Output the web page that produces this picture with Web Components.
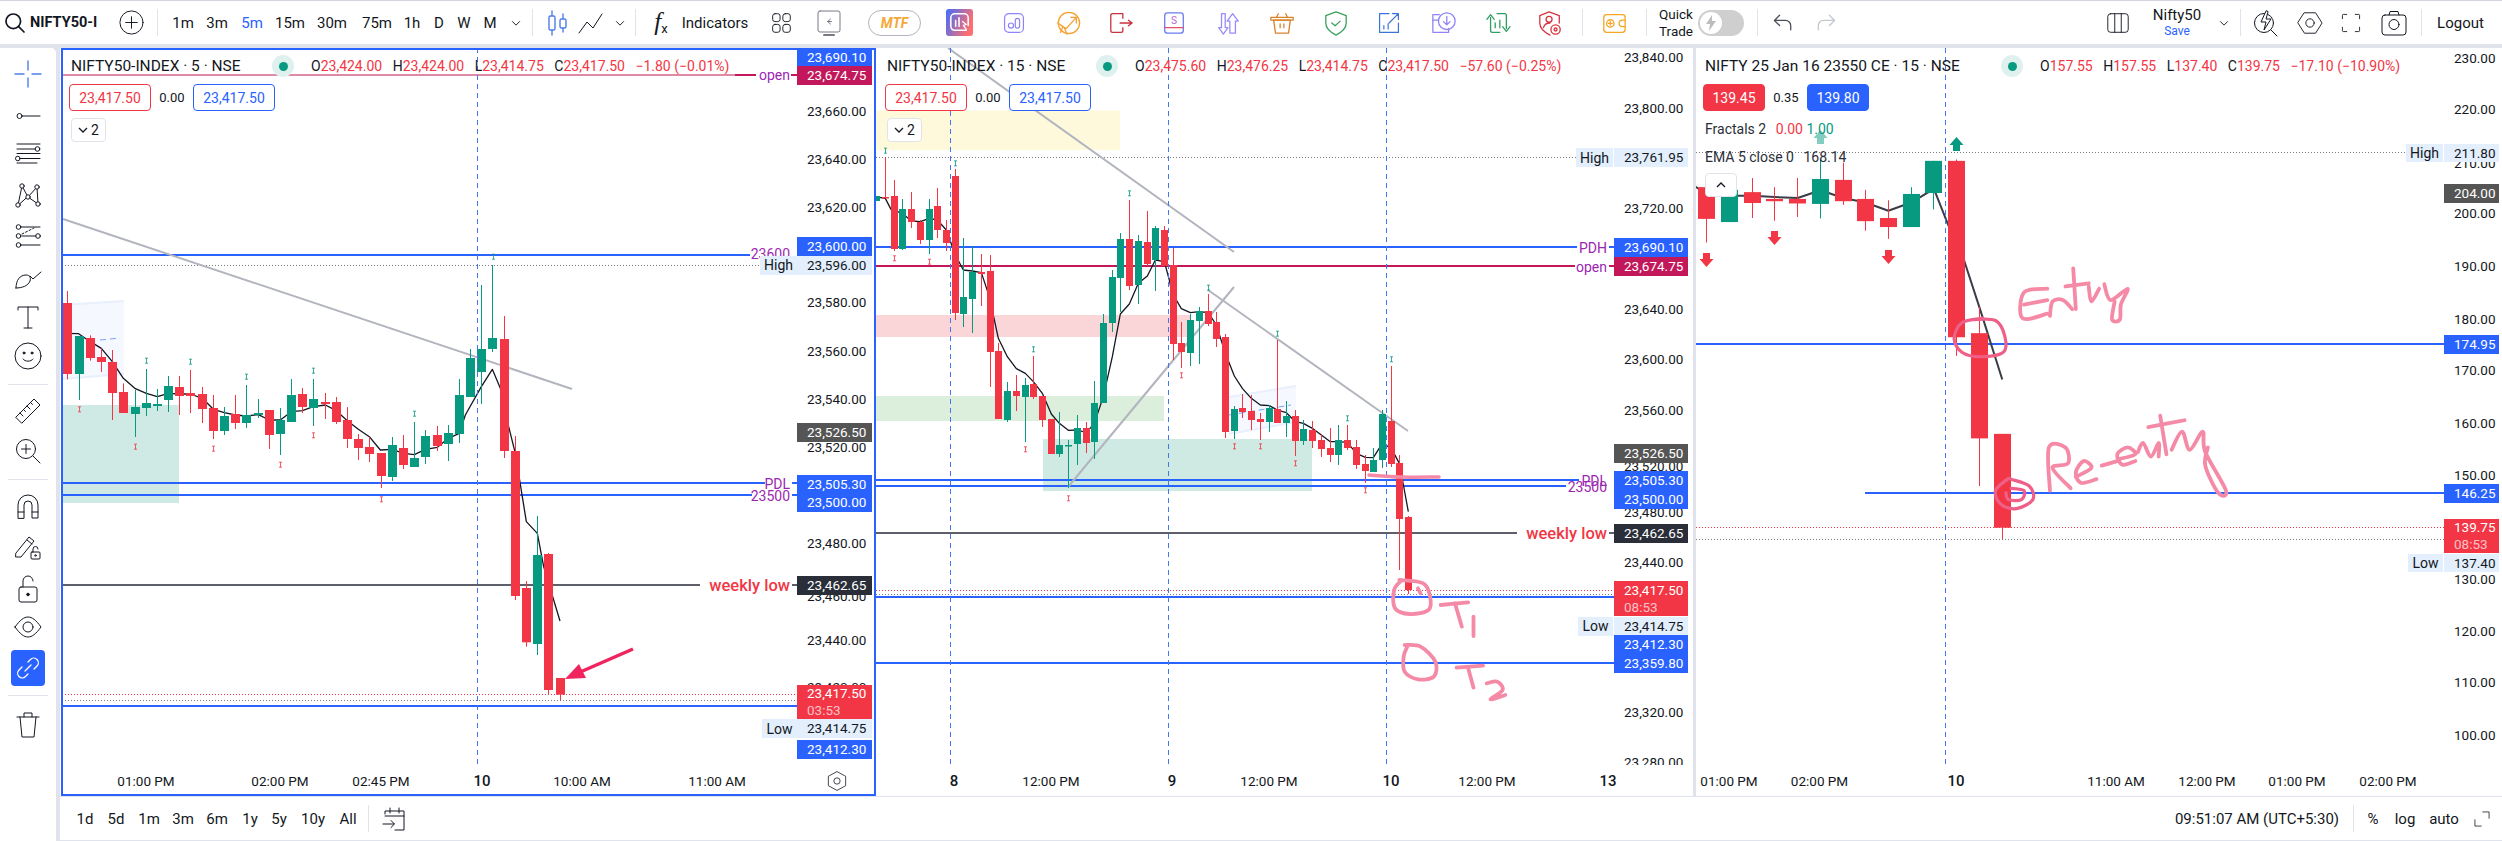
<!doctype html>
<html>
<head>
<meta charset="utf-8">
<title>Chart layout</title>
<style>
  html,body{margin:0;padding:0}
  body{
    width:2502px;height:841px;overflow:hidden;background:#e0e3eb;color:#131722;
    font-family:Roboto,"Liberation Sans",sans-serif;
    display:grid;grid-template-columns:60px 1fr;grid-template-rows:48px 793px;
  }
  top-bar{grid-column:1 / 3}
</style>
</head>
<body>

<top-bar>
  <tool-btn w="30"><tv-icon name="search" size="24"></tv-icon></tool-btn>
  <symbol-box w="72">NIFTY50-I</symbol-box>
  <tool-btn w="12"></tool-btn>
  <tool-btn w="34"><tv-icon name="plus" size="27"></tv-icon></tool-btn>
  <tool-btn w="9"></tool-btn><bar-sep></bar-sep><tool-btn w="8"></tool-btn>
  <tool-btn w="34">1m</tool-btn><tool-btn w="34">3m</tool-btn>
  <tool-btn w="36" style="color:#2962ff">5m</tool-btn><tool-btn w="40">15m</tool-btn>
  <tool-btn w="44">30m</tool-btn><tool-btn w="46">75m</tool-btn>
  <tool-btn w="24">1h</tool-btn><tool-btn w="30">D</tool-btn>
  <tool-btn w="20">W</tool-btn><tool-btn w="32">M</tool-btn>
  <tool-btn w="20"><tv-icon name="chev" size="20"></tv-icon></tool-btn>
  <tool-btn w="6"></tool-btn><bar-sep></bar-sep>
  <tool-btn w="48"><tv-icon name="candle" size="28" color="#4f7fe8"></tv-icon></tool-btn>
  <tool-btn w="18"><tv-icon name="line" size="28"></tv-icon></tool-btn>
  <tool-btn w="10"></tool-btn>
  <tool-btn w="22"><tv-icon name="chev" size="20"></tv-icon></tool-btn>
  <tool-btn w="4"></tool-btn><bar-sep></bar-sep>
  <tool-btn w="14"></tool-btn>
  <tool-btn w="22"><fx-mark>f<sub>x</sub></fx-mark></tool-btn>
  <tool-btn w="8"></tool-btn>
  <tool-btn w="70">Indicators</tool-btn>
  <tool-btn w="62"><tv-icon name="grid" size="26"></tv-icon></tool-btn>
  <tool-btn w="34"><tv-icon name="replay" size="28" color="#787b86"></tv-icon></tool-btn>
  <tool-btn w="22"></tool-btn>
  <mtf-pill>MTF</mtf-pill>
  <tool-btn w="77"><tv-icon name="grad" size="27"></tv-icon></tool-btn>
  <tool-btn w="32"><tv-icon name="bars" size="24" color="#8f84f8"></tv-icon></tool-btn>
  <tool-btn w="76"><tv-icon name="target" size="26" color="#f5a030"></tv-icon></tool-btn>
  <tool-btn w="30"><tv-icon name="exit" size="26" color="#c8323c"></tv-icon></tool-btn>
  <tool-btn w="76"><tv-icon name="book" size="26" color="#6b7cf0"></tv-icon></tool-btn>
  <tool-btn w="32"><tv-icon name="updown" size="26" color="#9a8cf8"></tv-icon></tool-btn>
  <tool-btn w="76"><tv-icon name="basket" size="26" color="#d9822b"></tv-icon></tool-btn>
  <tool-btn w="32"><tv-icon name="shield" size="26" color="#3aa05c"></tv-icon></tool-btn>
  <tool-btn w="74"><tv-icon name="growth" size="24" color="#3d72d8"></tv-icon></tool-btn>
  <tool-btn w="36"><tv-icon name="docclock" size="26" color="#8f84f8"></tv-icon></tool-btn>
  <tool-btn w="72"><tv-icon name="swap" size="26" color="#2f9e62"></tv-icon></tool-btn>
  <tool-btn w="32"><tv-icon name="guard" size="26" color="#d8323f"></tv-icon></tool-btn>
  <tool-btn w="16"></tool-btn><bar-sep></bar-sep>
  <tool-btn w="62"><tv-icon name="wallet" size="26" color="#f5a623"></tv-icon></tool-btn>
  <tool-btn w="1"></tool-btn><bar-sep></bar-sep>
  <tool-btn w="13"></tool-btn>
  <tool-btn w="32" style="font-size:13.5px;line-height:17px;white-space:normal">Quick Trade</tool-btn>
  <tool-btn w="6"></tool-btn>
  <trade-toggle></trade-toggle>
  <tool-btn w="13"></tool-btn><bar-sep></bar-sep>
  <tool-btn w="50"><tv-icon name="undo" size="24" color="#4a4e59"></tv-icon></tool-btn>
  <tool-btn w="36"><tv-icon name="redo" size="24" color="#c4c7cf"></tv-icon></tool-btn>
  <tool-btn w="256"></tool-btn>
  <tool-btn w="36"><tv-icon name="columns" size="26"></tv-icon></tool-btn>
  <tool-btn w="10"></tool-btn>
  <layout-name w="62" sub="Save">Nifty50</layout-name>
  <tool-btn w="32"><tv-icon name="chev" size="20"></tv-icon></tool-btn>
  <bar-sep></bar-sep>
  <tool-btn w="50"><tv-icon name="flash" size="28"></tv-icon></tool-btn>
  <tool-btn w="38"><tv-icon name="hex" size="26"></tv-icon></tool-btn>
  <tool-btn w="44"><tv-icon name="full" size="24"></tv-icon></tool-btn>
  <tool-btn w="42"><tv-icon name="camera" size="28"></tv-icon></tool-btn>
  <tool-btn w="6"></tool-btn><bar-sep></bar-sep>
  <tool-btn w="15"></tool-btn>
  <tool-btn w="47">Logout</tool-btn>
</top-bar>

<left-tools>
  <side-tool h="40"><tv-icon name="cross" color="#4f7fe8"></tv-icon></side-tool>
  <side-tool h="44"><tv-icon name="hline"></tv-icon></side-tool>
  <side-tool h="30"><tv-icon name="chan"></tv-icon></side-tool>
  <side-tool h="54"><tv-icon name="xabcd"></tv-icon></side-tool>
  <side-tool h="28"><tv-icon name="fib"></tv-icon></side-tool>
  <side-tool h="54"><tv-icon name="brush"></tv-icon></side-tool>
  <side-tool h="26"><tv-icon name="text"></tv-icon></side-tool>
  <side-tool h="52"><tv-icon name="smile"></tv-icon></side-tool>
  <side-line h="4"></side-line>
  <side-tool h="50"><tv-icon name="ruler"></tv-icon></side-tool>
  <side-tool h="30"><tv-icon name="zoomin"></tv-icon></side-tool>
  <side-line h="26"></side-line>
  <side-tool h="28"><tv-icon name="magnet"></tv-icon></side-tool>
  <side-tool h="54"><tv-icon name="pencil"></tv-icon></side-tool>
  <side-tool h="30"><tv-icon name="lock"></tv-icon></side-tool>
  <side-tool h="46"><tv-icon name="eye"></tv-icon></side-tool>
  <side-tool h="36" active><tv-icon name="link" color="#fff"></tv-icon></side-tool>
  <side-line h="18"></side-line>
  <side-tool h="40"><tv-icon name="trash"></tv-icon></side-tool>
</left-tools>

<chart-stage>
  <chart-pane chart="a" active>
    <chart-legend name="NIFTY50-INDEX · 5 · NSE" tw="203" left="9" o="23,424.00" h="23,424.00" l="23,414.75" c="23,417.50" chg="−1.80 (−0.01%)" bid="23,417.50" gap="0.00" ask="23,417.50" bw="82">
      <fold-button>2</fold-button>
    </chart-legend>
  </chart-pane>
  <chart-pane chart="b">
    <chart-legend name="NIFTY50-INDEX · 15 · NSE" tw="211" left="9" o="23,475.60" h="23,476.25" l="23,414.75" c="23,417.50" chg="−57.60 (−0.25%)" bid="23,417.50" gap="0.00" ask="23,417.50" bw="82">
      <fold-button>2</fold-button>
    </chart-legend>
  </chart-pane>
  <chart-pane chart="c">
    <chart-legend name="NIFTY 25 Jan 16 23550 CE · 15 · NSE" tw="298" left="7" o="157.55" h="157.55" l="137.40" c="139.75" chg="−17.10 (−10.90%)" bid="139.45" gap="0.35" ask="139.80" bw="62" solid>
      <study-row>Fractals 2 <span style="margin-left:6px;color:#f23645">0.00</span> <span style="color:#089981">1.00</span></study-row>
      <study-row>EMA 5 close 0 <span style="margin-left:6px">168.14</span></study-row>
      <fold-button up></fold-button>
    </chart-legend>
  </chart-pane>
  <bottom-bar>
    <tool-btn w="10"></tool-btn>
    <tool-btn w="30">1d</tool-btn><tool-btn w="32">5d</tool-btn><tool-btn w="34">1m</tool-btn>
    <tool-btn w="34">3m</tool-btn><tool-btn w="34">6m</tool-btn><tool-btn w="32">1y</tool-btn>
    <tool-btn w="26">5y</tool-btn><tool-btn w="42">10y</tool-btn><tool-btn w="28">All</tool-btn>
    <tool-btn w="6"></tool-btn><bar-sep></bar-sep>
    <tool-btn w="50"><tv-icon name="calendar" size="28"></tv-icon></tool-btn>
    <tool-btn style="flex:1"></tool-btn>
    <tool-btn w="168">09:51:07 AM (UTC+5:30)</tool-btn>
    <tool-btn w="12"></tool-btn><bar-sep></bar-sep><tool-btn w="8"></tool-btn>
    <tool-btn w="22">%</tool-btn><tool-btn w="42">log</tool-btn><tool-btn w="36">auto</tool-btn>
    <tool-btn w="40"><tv-icon name="expand" size="22"></tv-icon></tool-btn>
  </bottom-bar>
</chart-stage>

<script>
// icons: stroke uses currentColor, viewBox is always 28x28
const ICONS = {
  search:'<circle cx="12" cy="12" r="8.5" stroke-width="2"/><path d="M18 18l6.5 6.5" stroke-width="2"/>',
  plus:'<circle cx="14" cy="14" r="12"/><path d="M14 8v12M8 14h12"/>',
  chev:'<path d="M9 12l5 5 5-5" stroke-width="1.3"/>',
  candle:'<path d="M9 2v24M20 5v18" stroke-width="1.4"/><rect x="6" y="7" width="6" height="14" rx="1.5" fill="#fff" stroke-width="1.4"/><rect x="17" y="10" width="6" height="9" rx="1.5" fill="#fff" stroke-width="1.4"/>',
  line:'<path d="M3 24l8-11 6 6 9-14"/>',
  grid:'<rect x="5" y="4" width="8" height="8.5" rx="2.5"/><rect x="16" y="4" width="8" height="8.5" rx="2.5"/><rect x="5" y="15.500" width="8" height="8.5" rx="2.5"/><rect x="16" y="15.500" width="8" height="8.5" rx="2.5"/>',
  replay:'<rect x="3" y="2" width="22" height="21" rx="2"/><path d="M15.500 10l-3 2.500 3 2.500M12.500 12.500h4"/><path d="M9 26h10" stroke-width="2"/>',
  grad:'<defs><linearGradient id="g" x1="0" y1="0" x2="1" y2="0.400"><stop offset="0" stop-color="#3f6dff"/><stop offset="1" stop-color="#ff6f6f"/></linearGradient></defs><rect width="28" height="28" rx="3" fill="url(#g)" stroke="none"/><path d="M21 22H9a4 4 0 0 1-4-4V9a4 4 0 0 1 4-4h10a4 4 0 0 1 4 4v8" stroke="#fff" stroke-width="1.6"/><path d="M10 18v-6M13.500 18V9" stroke="#fff" stroke-width="1.6"/><path d="M17 13l4 3-3 1 3 4" stroke="#fff" stroke-width="1.300"/>',
  bars:'<rect x="3" y="3" width="22" height="22" rx="5" stroke-width="1.4"/><circle cx="10.500" cy="17" r="3" stroke-width="1.4"/><rect x="15.500" y="8.500" width="5" height="11.500" rx="2.500" stroke-width="1.4"/>',
  target:'<circle cx="15" cy="14" r="11.500" stroke-width="1.4"/><path d="M3 14l7 5 3 7M3 14l9 6 11-12M23 8h-6M23 8v6M8 19l-2 5" stroke-width="1.4" fill="#fff"/>',
  exit:'<path d="M16 4H5a2 2 0 0 0-2 2v16a2 2 0 0 0 2 2h9a2 2 0 0 0 2-2v-3M16 9V4" stroke-width="1.4"/><path d="M13 14h13M22 11l4 3-4 3" stroke-width="1.4"/>',
  book:'<rect x="4" y="3" width="20" height="22" rx="3" stroke-width="1.4"/><path d="M4 19h20" stroke="#e0506a" stroke-width="1.4"/><text x="14" y="15" font-size="11" font-family="Roboto" fill="#b36bd0" stroke="none" text-anchor="middle">S</text>',
  updown:'<path d="M7 4h4v15h3l-5 7-5-7h3z" stroke-width="1.4"/><path d="M19 4l6 8h-3v13h-6V12h-3z" stroke-width="1.4"/>',
  basket:'<path d="M5 11h18l-2 14H7z" stroke-width="1.4"/><path d="M2 8h24v3H2z" stroke-width="1.4"/><path d="M8 8l2-4M20 8l-2-4" stroke-width="1.4"/><path d="M12 15v4M16 15v4" stroke-width="1.4"/>',
  shield:'<path d="M14 2l11 4v8c0 6-5 10-11 13C8 24 3 20 3 14V6z" stroke-width="1.4"/><path d="M9.500 14l3.500 3 5.500-5" stroke-width="1.4"/>',
  growth:'<path d="M14 3H3v22h22V14" stroke-width="1.4"/><path d="M14 14L25 3M18 3h7v7M8 21v-4M13 21v-6" stroke-width="1.4"/>',
  docclock:'<path d="M9 5H2v19h17v-4" stroke-width="1.4"/><path d="M2 11h6" stroke-width="1.4"/><circle cx="17" cy="12" r="9" stroke-width="1.4"/><path d="M17 7v9M13.500 12.500l3.500 3.500 3.500-3.500" stroke-width="1.4"/>',
  swap:'<path d="M6 8v14a2 2 0 0 0 2 2h8M2 10l4-5 4 5" stroke-width="1.4"/><path d="M23 20V6a2 2 0 0 0-2-2h-8M19 18l4 5 4-5" stroke-width="1.4"/><path d="M11 19v-5M16 19v-8" stroke-width="1.4"/>',
  guard:'<path d="M13 2l11 4v8M14 27C8 24 3 20 3 14V6l10-4" stroke-width="1.4"/><circle cx="13" cy="10" r="3.200" stroke-width="1.4"/><path d="M7 19c1-4 4-5 7-5" stroke-width="1.4"/><circle cx="20" cy="21" r="5" stroke-width="1.4"/><circle cx="20" cy="21" r="1.600" stroke-width="1.4"/>',
  wallet:'<rect x="3" y="5" width="23" height="19" rx="3" stroke-width="1.4"/><circle cx="10" cy="14.500" r="4" stroke-width="1.4"/><path d="M10 12.500v4M8 14.500h4M26 11h-3a3.500 3.500 0 0 0 0 7h3" stroke-width="1.4"/>',
  undo:'<path d="M10 5L4 11l6 6M4 11h13a6 6 0 0 1 6 6v5" stroke-width="1.5"/>',
  redo:'<path d="M18 5l6 6-6 6M24 11H11a6 6 0 0 0-6 6v5" stroke-width="1.5"/>',
  columns:'<rect x="3" y="4" width="22" height="20" rx="3"/><path d="M10.500 4v20M17.500 4v20"/>',
  flash:'<circle cx="12" cy="14" r="9.500"/><path d="M19 21l6 6"/><path d="M14 2L9 13h5l-2 8 7-11h-5l2-7z" fill="#fff"/>',
  hex:'<path d="M8 3h12l7 11-7 11H8L1 14z"/><circle cx="14" cy="14" r="4.500"/>',
  full:'<path d="M4 9V5a1 1 0 0 1 1-1h4M19 4h4a1 1 0 0 1 1 1v4M24 19v4a1 1 0 0 1-1 1h-4M9 24H5a1 1 0 0 1-1-1v-4"/>',
  camera:'<rect x="2" y="6" width="24" height="20" rx="3"/><path d="M9 6l1-3.500h8L19 6"/><circle cx="14" cy="15.500" r="5"/>',
  calendar:'<path d="M5 9V6h19v19h-9M5 11h19M10 3v5M19 3v5"/><path d="M3 19h11M11 15.500l3.500 3.500-3.500 3.500"/>',
  expand:'<path d="M5 15v8h8M23 13V5h-8"/>',
  cross:'<path d="M14 1v9M14 18v9M1 14h9M18 14h9" stroke-width="1.4"/>',
  hline:'<circle cx="5.500" cy="14" r="2.500"/><path d="M8 14h18"/>',
  chan:'<path d="M3 5h23M3 10h18M6 19.500h20M3 14.500h23M3 24h20"/><circle cx="23.500" cy="10" r="2.300"/><circle cx="3.800" cy="19.500" r="2.300"/>',
  xabcd:'<path d="M4 24L8 5l6 11 9-10 1 17-10-7z"/><circle cx="4" cy="24" r="2.200" fill="#fff"/><circle cx="8" cy="5" r="2.200" fill="#fff"/><circle cx="14" cy="16" r="2.200" fill="#fff"/><circle cx="23" cy="6" r="2.200" fill="#fff"/><circle cx="24" cy="23" r="2.200" fill="#fff"/>',
  fib:'<path d="M7 5h19M8 14h14M7 23h19"/><path d="M8 12l12-6" stroke-dasharray="2 2"/><circle cx="4.500" cy="5" r="2.300"/><circle cx="4.500" cy="14" r="2.300"/><circle cx="4.500" cy="23" r="2.300"/><circle cx="24" cy="14" r="2.300"/>',
  brush:'<path d="M2 25c0-8 4-13 10-13 4 0 5 3 4 6-2 5-8 7-14 7z"/><path d="M16 13l3 3 8-7"/>',
  text:'<path d="M4 7V4h20v3M14 4v21M10 25h8"/>',
  smile:'<circle cx="14" cy="14" r="13"/><path d="M9 17c2 3 8 3 10 0"/><circle cx="10" cy="11" r="1" fill="currentColor"/><circle cx="18" cy="11" r="1" fill="currentColor"/>',
  ruler:'<path d="M2 20L20 2l6 6L8 26z"/><path d="M6 16l3 3M9.500 12.500l2 2M13 9l3 3M16.500 5.500l2 2"/>',
  zoomin:'<circle cx="12" cy="12" r="9.500"/><path d="M19 19l7 7M12 7.500v9M7.500 12h9"/>',
  magnet:'<path d="M4 26V13a10 10 0 0 1 20 0v13h-6V13a4 4 0 0 0-8 0v13zM4 20h6M18 20h6"/>',
  pencil:'<path d="M2 20L15 4l5 4L7 24H2z"/><path d="M13 7l5 4"/><rect x="17" y="19" width="9" height="7" rx="1"/><path d="M19 19v-3a2.500 2.500 0 0 1 5 0"/><circle cx="21.500" cy="22.500" r=".8"/>',
  lock:'<rect x="5" y="12" width="18" height="15" rx="2"/><path d="M9 12V6a5 5 0 0 1 10 0"/><circle cx="14" cy="19.500" r="1.300" fill="currentColor"/>',
  eye:'<path d="M1 14C6 7 10 4 14 4s8 3 13 10c-5 7-9 10-13 10S6 21 1 14z"/><circle cx="14" cy="14" r="5"/>',
  link:'<path d="M11 17l6-6M14 8l2.500-2.500a4.500 4.500 0 0 1 6.500 6.500L20 15M14 20l-2.500 2.500A4.500 4.500 0 0 1 5 16l3-3" stroke-width="1.300"/>',
  trash:'<path d="M3 7h22M10 7V3h8v4M6 7l2 20h12l2-20"/>'
};

class TvIcon extends HTMLElement {
  connectedCallback(){
    if(this.shadowRoot) return;
    const size = this.getAttribute('size') || 28;
    const color = this.getAttribute('color') || 'currentColor';
    const root = this.attachShadow({mode:'open'});
    root.innerHTML = `<style>:host{display:block;line-height:0;color:${color}}</style>
      <svg width="${size}" height="${size}" viewBox="0 0 28 28" fill="none" stroke="currentColor" stroke-linecap="round" stroke-linejoin="round">${ICONS[this.getAttribute('name')]}</svg>`;
  }
}
customElements.define('tv-icon', TvIcon);

class TopBar extends HTMLElement {
  constructor(){
    super();
    this.attachShadow({mode:'open'}).innerHTML = `<style>
      :host{display:flex;align-items:center;height:43px;margin-top:1px;background:#fff;font-size:15px;box-shadow:0 -1px 0 #d1d4dc}
    </style><slot></slot>`;
  }
}
customElements.define('top-bar', TopBar);

class BottomBar extends HTMLElement {
  constructor(){
    super();
    this.attachShadow({mode:'open'}).innerHTML = `<style>
      :host{flex:none;display:flex;align-items:center;height:43px;background:#fff;border-top:1px solid #e0e3eb;font-size:15px}
    </style><slot></slot>`;
  }
}
customElements.define('bottom-bar', BottomBar);

class ToolBtn extends HTMLElement {
  constructor(){
    super();
    this.attachShadow({mode:'open'}).innerHTML = `<style>
      :host{flex:none;display:flex;align-items:center;justify-content:center;white-space:nowrap}
    </style><slot></slot>`;
  }
  connectedCallback(){
    const w = this.getAttribute('w');
    if(w) this.style.width = w + 'px';
  }
}
customElements.define('tool-btn', ToolBtn);

class BarSep extends HTMLElement {
  constructor(){
    super();
    this.attachShadow({mode:'open'}).innerHTML = `<style>
      :host{flex:none;width:1px;height:27px;background:#e0e3eb}
    </style>`;
  }
}
customElements.define('bar-sep', BarSep);

class SymbolBox extends HTMLElement {
  constructor(){
    super();
    this.attachShadow({mode:'open'}).innerHTML = `<style>
      :host{flex:none;white-space:nowrap;font-weight:700;font-size:14.5px}
    </style><slot></slot>`;
  }
  connectedCallback(){ this.style.width = this.getAttribute('w') + 'px'; }
}
customElements.define('symbol-box', SymbolBox);

class FxMark extends HTMLElement {
  constructor(){
    super();
    this.attachShadow({mode:'open'}).innerHTML = `<style>
      :host{display:block;font:italic 25px "Liberation Serif",serif;line-height:1}
      ::slotted(sub){font:13px Roboto,sans-serif;vertical-align:-3px}
    </style><slot></slot>`;
  }
}
customElements.define('fx-mark', FxMark);

class MtfPill extends HTMLElement {
  constructor(){
    super();
    this.attachShadow({mode:'open'}).innerHTML = `<style>
      :host{flex:none;box-sizing:border-box;width:53px;height:26px;border:1.5px solid #b2b5be;border-radius:13px;display:flex;align-items:center;justify-content:center;font:italic 700 14px Roboto,sans-serif;color:#f5a93a}
    </style><slot></slot>`;
  }
}
customElements.define('mtf-pill', MtfPill);

class TradeToggle extends HTMLElement {
  constructor(){
    super();
    this.attachShadow({mode:'open'}).innerHTML = `<style>
      :host{flex:none;width:46px;height:26px;border-radius:13px;background:#cfcfcf;display:flex;align-items:center;padding-left:2px;box-sizing:border-box}
      .knob{width:22px;height:22px;border-radius:50%;background:#fff;display:flex;align-items:center;justify-content:center}
    </style><div class="knob"><svg width="12" height="16" viewBox="0 0 12 16"><path d="M7 0L1 9h4l-1 7 7-10H7z" fill="#bdbdbd"/></svg></div>`;
  }
}
customElements.define('trade-toggle', TradeToggle);

class LayoutName extends HTMLElement {
  connectedCallback(){
    if(this.shadowRoot) return;
    this.attachShadow({mode:'open'}).innerHTML = `<style>
      :host{flex:none;display:flex;flex-direction:column;align-items:center;width:${this.getAttribute('w')}px;font-size:15px;line-height:17px}
      span{font-size:12px;line-height:14px;color:#2962ff}
    </style><slot></slot><span>${this.getAttribute('sub')}</span>`;
  }
}
customElements.define('layout-name', LayoutName);

class LeftTools extends HTMLElement {
  constructor(){
    super();
    this.attachShadow({mode:'open'}).innerHTML = `<style>
      :host{display:flex;flex-direction:column;align-items:center;width:56px;background:#fff;border-top-right-radius:5px;padding-top:6px;box-sizing:border-box}
    </style><slot></slot>`;
  }
}
customElements.define('left-tools', LeftTools);

class SideTool extends HTMLElement {
  constructor(){
    super();
    this.attachShadow({mode:'open'}).innerHTML = `<style>
      :host{flex:none;width:34px;display:flex;align-items:center;justify-content:center;margin-left:-1px;border-radius:4px}
      :host([active]){background:#2962ff}
    </style><slot></slot>`;
  }
  connectedCallback(){ this.style.height = this.getAttribute('h') + 'px'; }
}
customElements.define('side-tool', SideTool);

class SideLine extends HTMLElement {
  constructor(){
    super();
    this.attachShadow({mode:'open'}).innerHTML = `<style>
      :host{flex:none;width:40px;display:flex;align-items:center;margin-left:-1px}
      div{height:1px;width:100%;background:#e0e3eb}
    </style><div></div>`;
  }
  connectedCallback(){ this.style.height = this.getAttribute('h') + 'px'; }
}
customElements.define('side-line', SideLine);

class ChartStage extends HTMLElement {
  constructor(){
    super();
    this.attachShadow({mode:'open'}).innerHTML = `<style>
      :host{display:grid;grid-template-columns:816px 817px 809px;grid-template-rows:748px 44px}
      ::slotted(bottom-bar){grid-column:1 / 4}
      ::slotted([chart=c]){margin-left:3px}
    </style><slot></slot>`;
  }
}
customElements.define('chart-stage', ChartStage);

class ChartLegend extends HTMLElement {
  connectedCallback(){
    if(this.shadowRoot) return;
    const a = n => this.getAttribute(n);
    const solid = this.hasAttribute('solid');
    const val = (k,v) => `<span class="k">${k}</span><span class="v">${v}</span>`;
    this.attachShadow({mode:'open'}).innerHTML = `<style>
      :host{position:absolute;left:${a('left')}px;top:0;display:flex;flex-direction:column;align-items:flex-start;font-size:14px;pointer-events:none}
      .head{display:flex;align-items:center;height:22px;margin-top:7px;white-space:nowrap}
      .name{width:${a('tw')}px;padding-left:2px;box-sizing:border-box;font-size:15.5px}
      .dot{width:22px;height:22px;border-radius:50%;background:#dff1ee;display:flex;align-items:center;justify-content:center;margin-right:17px}
      .dot i{width:9px;height:9px;border-radius:50%;background:#089981}
      .v{color:#f23645;margin-right:10.5px}
      .chg{color:#f23645}
      .quote{display:flex;align-items:center;margin-top:7px;height:27px}
      .box{width:${a('bw')}px;height:27px;box-sizing:border-box;border:1px solid;border-radius:4px;display:flex;align-items:center;justify-content:center;background:#fff}
      .sell{color:#f23645}.buy{color:#2962ff}
      .solid .sell{background:#f23645;border-color:#f23645;color:#fff}
      .solid .buy{background:#2962ff;border-color:#2962ff;color:#fff}
      .mid{width:42px;text-align:center;font-size:13px}
    </style>
    <div class="head"><div class="name">${a('name')}</div><div class="dot"><i></i></div>
      ${val('O',a('o'))}${val('H',a('h'))}${val('L',a('l'))}${val('C',a('c'))}<span class="chg">${a('chg')}</span></div>
    <div class="quote ${solid?'solid':''}"><div class="box sell">${a('bid')}</div><div class="mid">${a('gap')}</div><div class="box buy">${a('ask')}</div></div>
    <slot></slot>`;
  }
}
customElements.define('chart-legend', ChartLegend);

class StudyRow extends HTMLElement {
  constructor(){
    super();
    this.attachShadow({mode:'open'}).innerHTML = `<style>
      :host{display:block;height:28px;line-height:28px;padding-left:2px;white-space:nowrap;color:#2a2e39}
      :host(:first-of-type){margin-top:4px}
    </style><slot></slot>`;
  }
}
customElements.define('study-row', StudyRow);

class FoldButton extends HTMLElement {
  connectedCallback(){
    if(this.shadowRoot) return;
    const up = this.hasAttribute('up');
    this.attachShadow({mode:'open'}).innerHTML = `<style>
      :host{margin:7px 0 0 2px;box-sizing:border-box;height:24px;width:${up?32:35}px;border:1px solid #e0e3eb;border-radius:4px;background:#fff;display:flex;align-items:center;justify-content:center;gap:3px;font-size:14px;color:#131722}
      :host([up]){margin-top:2px}
    </style><svg width="10" height="6" viewBox="0 0 10 6" fill="none" stroke="#131722" stroke-width="1.300"><path d="${up?'M1 5l4-4 4 4':'M1 1l4 4 4-4'}"/></svg><slot></slot>`;
  }
}
customElements.define('fold-button', FoldButton);

class PriceTag extends HTMLElement {
  constructor(){
    super();
    this.attachShadow({mode:'open'}).innerHTML = `<style>
      :host{position:absolute;box-sizing:border-box;padding-left:10px;display:flex;flex-direction:column;justify-content:center;font-size:13.5px;line-height:17px;white-space:nowrap}
      :host([kind=blue]){background:#2962ff;color:#fff}
      :host([kind=pink]){background:#c2185b;color:#fff}
      :host([kind=gray]){background:#555;color:#fff}
      :host([kind=dark]){background:#2a2e39;color:#fff}
      :host([kind=red]){background:#f23645;color:#fff}
      :host([kind=light]){background:#e3effd;color:#131722}
    </style><slot></slot>`;
  }
}
customElements.define('price-tag', PriceTag);

// catmull-rom through the points, used for the hand drawn marks
function smooth(p){
  let d = `M${p[0][0]} ${p[0][1]}`;
  for(let i=0;i<p.length-1;i++){
    const a=p[i-1]||p[i], b=p[i], c=p[i+1], e=p[i+2]||c;
    d += `C${b[0]+(c[0]-a[0])/6} ${b[1]+(c[1]-a[1])/6} ${c[0]-(e[0]-b[0])/6} ${c[1]-(e[1]-b[1])/6} ${c[0]} ${c[1]}`;
  }
  return d;
}
const mapper = (ox,oy,sx,sy) => p => [ox+p[0]*sx, oy+p[1]*sy];
const BLUE='#2962ff', GRAY='#5d606b', PINK='#c2185b', PURPLE='#9c27b0', RED='#f23645', TEAL='#089981';

function candles(list, map, bw){
  return list.map(([X,wt,bt,bb,wb,c])=>{
    const col = c==='r'?RED:TEAL;
    const [cx,t] = map([X,bt]);
    const b = map([X,bb])[1], wT = map([X,wt])[1], wB = map([X,wb])[1];
    const lx = Math.round(cx-bw/2);
    return `<rect x="${lx+Math.floor(bw/2)}" y="${wT}" width="1" height="${wB-wT}" fill="${col}"/><rect x="${lx}" y="${t}" width="${bw}" height="${Math.max(b-t,1.5)}" fill="${col}"/>`;
  }).join('');
}
function marks(list, map, col){
  return list.map(p=>{
    const [x,y] = map(p), X=Math.round(x)+.5;
    return `<path d="M${X-1.500} ${y-2.500}h3M${X} ${y-2.500}v5M${X-1.500} ${y+2.500}h3" stroke="${col}" fill="none" opacity=".8"/>`;
  }).join('');
}
const hline = (x1,y,x2,col,w=2) => `<rect x="${x1}" y="${y-w/2}" width="${x2-x1}" height="${w}" fill="${col}"/>`;
const dotted = (x1,y,x2,col) => `<path d="M${x1} ${y}H${x2}" stroke="${col}" stroke-dasharray="1 2" fill="none"/>`;
const vdash = (x,y1,y2) => `<path d="M${x+.5} ${y1}V${y2}" stroke="#3f78f2" stroke-dasharray="5 4" fill="none"/>`;
const zone = (x,y,w,h,f) => `<rect x="${x}" y="${y}" width="${w}" height="${h}" fill="${f}"/>`;
const trend = (x1,y1,x2,y2) => `<path d="M${x1} ${y1}L${x2} ${y2}" stroke="#b2b5be" stroke-width="2" fill="none"/>`;
const ema = (pts,map,w=1.3,c='#131722') => `<path d="M${pts.map(p=>map(p).join(' ')).join('L')}" stroke="${c}" stroke-width="${w}" fill="none" stroke-linejoin="round"/>`;
const ink = (pts,map,w=3.8,c='#f58aa6') => `<path d="${smooth(pts.map(map))}" stroke="${c}" stroke-width="${w}" fill="none" stroke-linecap="round" stroke-linejoin="round"/>`;

// ---- chart A, 5 minute ----
const mA = mapper(62,290,1/3,1/3);
const candA = [[16,3,39,252,268,'r'],[52,138,138,252,330,'g'],[85,136,144,204,212,'r'],[118,175,201,216,246,'r'],[151,180,216,309,390,'r'],[184,280,306,369,369,'r'],[220,300,351,372,441,'g'],[253,237,339,354,378,'g'],[286,297,342,348,363,'g'],[319,258,288,330,366,'g'],[352,258,291,318,375,'r'],[385,240,309,318,369,'r'],[421,291,312,357,399,'r'],[454,315,354,423,447,'r'],[487,351,378,423,435,'g'],[520,315,372,399,417,'r'],[553,285,375,399,414,'g'],[589,327,369,375,384,'g'],[622,360,360,435,477,'r'],[655,354,390,432,495,'g'],[688,267,315,396,396,'g'],[721,294,312,351,369,'r'],[754,267,327,354,408,'g'],[790,309,336,342,387,'r'],[823,321,336,396,402,'r'],[856,351,390,447,474,'r'],[889,432,447,474,510,'r'],[922,441,471,492,516,'r'],[958,489,489,558,594,'r'],[991,441,465,561,573,'g'],[1024,435,474,525,537,'r'],[1057,396,504,531,531,'g'],[1090,420,438,501,522,'g'],[1126,408,435,468,483,'r'],[1159,405,429,462,513,'g'],[1192,267,315,432,459,'g'],[1225,177,204,321,321,'g'],[1258,-15,177,246,342,'g'],[1291,-75,144,177,186,'g'],[1327,78,147,483,504,'r'],[1360,438,483,918,930,'r'],[1393,873,894,1057,1070,'r'],[1426,678,795,1062,1095,'g'],[1459,789,792,1200,1215,'r'],[1496,1164,1164,1214,1231,'r']];
const emaA = [[0,130],[50,131],[85,155],[118,175],[151,215],[184,265],[220,296],[253,310],[286,320],[319,310],[352,312],[385,312],[421,325],[454,358],[487,368],[520,375],[553,378],[589,374],[622,390],[655,390],[688,365],[721,362],[754,350],[790,345],[823,362],[856,392],[889,418],[922,440],[955,480],[991,478],[1024,490],[1057,494],[1090,478],[1126,472],[1159,445],[1192,430],[1210,375],[1258,290],[1291,238],[1315,295],[1340,410],[1360,490],[1393,695],[1426,730],[1445,830],[1494,993]];

// ---- chart B, 15 minute ----
const mB1 = mapper(876,140,1/3,1/3), mB2 = mapper(1176,240,1/3,1/3), mB3 = mapper(870,420,1/1.889,1/3);
const candB1 = [[28,51,171,174,174,'r'],[55,120,168,327,333,'r'],[79,177,207,327,330,'g'],[106,156,207,246,264,'r'],[133,240,246,300,312,'r'],[160,177,207,300,342,'g'],[184,144,198,270,294,'r'],[211,240,270,309,333,'r'],[238,87,108,519,540,'r'],[262,294,471,522,561,'g'],[289,318,396,477,579,'g'],[316,342,396,402,498,'r'],[343,345,393,636,741,'r'],[367,609,633,837,837,'r'],[394,726,753,840,846,'g'],[421,705,753,768,813,'r'],[448,714,735,771,906,'g'],[472,648,732,771,777,'r'],[499,768,768,840,861,'r'],[526,837,837,942,942,'r'],[550,816,915,942,951,'g'],[577,900,915,918,1044,'g'],[604,825,864,912,975,'g'],[631,846,864,909,939,'r'],[655,723,789,906,957,'g'],[682,522,549,789,789,'g'],[709,390,411,549,576,'g'],[733,279,297,414,516,'g'],[760,180,297,438,450,'r'],[787,285,303,435,492,'g'],[814,213,306,372,378,'r'],[838,258,264,360,453,'g'],[865,258,270,378,378,'r'],[892,324,375,612,660,'r']];
const candB2 = [[16,246,309,336,384,'r'],[43,222,240,339,378,'g'],[70,201,213,243,372,'g'],[97,162,213,252,258,'r'],[121,216,246,297,321,'r'],[148,282,291,576,594,'r'],[175,498,507,573,597,'g'],[199,462,504,516,534,'r'],[226,465,513,540,570,'r'],[253,519,537,546,600,'r'],[280,495,504,546,576,'g'],[304,300,507,549,549,'r'],[331,483,528,549,591,'g'],[358,510,528,603,648,'r'],[382,540,567,603,615,'g'],[409,543,570,603,624,'r'],[436,582,600,627,651,'r'],[463,564,624,645,666,'r'],[487,555,600,645,675,'g'],[514,555,600,624,630,'r'],[541,600,621,675,687,'r'],[568,645,672,693,729,'r'],[592,624,660,696,696,'g'],[619,510,522,660,684,'g'],[646,378,543,672,681,'r'],[670,645,669,837,990,'r'],[697,828,831,1050,1062,'r']];
const emaB1 = [[10,172],[28,175],[45,208],[79,220],[106,243],[133,245],[160,235],[184,240],[211,270],[238,345],[262,390],[289,393],[316,398],[340,470],[367,595],[394,650],[421,686],[448,700],[472,725],[499,760],[526,822],[550,850],[577,871],[604,870],[631,878],[655,850],[682,770],[709,650],[733,522],[760,492],[787,430],[814,408],[838,360],[865,365],[880,420],[892,480]];
const emaB2 = [[-8,165],[16,206],[43,218],[70,215],[97,218],[121,255],[148,340],[175,408],[199,445],[226,475],[253,495],[280,497],[304,510],[331,518],[358,545],[382,550],[409,565],[436,585],[463,605],[487,605],[514,607],[541,640],[568,652],[592,653],[619,610],[646,625],[670,670],[685,750],[697,815]];

// ---- chart C, option ----
const mC = mapper(1690,130,1/1.931,1/2.205);
const candC = [[32,126,126,196,248,'r'],[76,106,132,203,203,'g'],[120,106,137,161,194,'r'],[164,126,152,157,200,'r'],[208,106,152,162,192,'r'],[252,65,108,163,195,'g'],[296,72,110,157,165,'r'],[339,132,152,201,222,'r'],[383,155,194,214,240,'r'],[427,126,141,214,214,'g'],[471,68,68,139,175,'g'],[515,65,68,457,498,'r'],[559,390,448,680,785,'r'],[603,670,670,877,902,'r']];
const emaC = [[10,125],[32,140],[76,145],[120,145],[164,148],[208,150],[252,133],[296,150],[339,160],[383,178],[427,160],[471,130],[497,205],[530,290],[560,395],[603,550]];
const arrow = (x,y,up,col,op=1) => { const s = up?1:-1;
  return `<path d="M${x} ${y-7*s}L${x+7} ${y+1*s}H${x+3.500}V${y+7*s}H${x-3.500}V${y+1*s}H${x-7}Z" fill="${col}" opacity="${op}"/>`; };

const CHARTS = {
  a:{ x:60, w:816, axis:[797,75],
    art: () =>
      zone(62,405,117,98,'#cfe9e4') +
      `<path d="M62 305L124 301V374L62 379Z" fill="#f5f8fe"/><path d="M62 305L124 301M62 379L124 374" stroke="#e8effd" stroke-width="2"/><path d="M100 340L120 338" stroke="#7ba4f7" stroke-dasharray="6 4"/>` +
      hline(62,75,735,'#e08aa8') + hline(735,75,756,PINK) + hline(791,75,797,PINK) +
      hline(62,255,750,BLUE) + hline(62,483,765,BLUE) + hline(792,483,797,BLUE) + hline(62,495,752,BLUE) + hline(792,495,797,BLUE) +
      hline(62,706,797,BLUE) + hline(62,585,700,GRAY) + hline(792,585,797,GRAY) +
      dotted(62,265.500,762,'#787b86') + dotted(62,694.500,797,RED) + dotted(62,700.500,797,'#787b86') +
      trend(63,219,572,389) +
      ema(emaA,mA) + candles(candA,mA,9) +
      marks([[253,212],[385,215],[553,260],[754,242],[1057,371],[1292,-100]],mA,TEAL) +
      marks([[52,358],[220,470],[454,476],[655,524],[754,436],[958,628]],mA,RED) +
      vdash(477,48,765) +
      `<path d="M633 649L578 673" stroke="#f0245e" stroke-width="3.500" fill="none"/><path d="M565 679L579 664L586 678Z" fill="#f0245e"/>`,
    ticks:[[111,'23,660.00'],[158.6,'23,640.00'],[206.6,'23,620.00'],[302,'23,580.00'],[350.5,'23,560.00'],[398.5,'23,540.00'],[446.5,'23,520.00'],[542.7,'23,480.00'],[596,'23,460.00'],[639.7,'23,440.00'],[687,'23,420.00']],
    notes:[[790,75,'open',PURPLE],[790,254,'23600',PURPLE],[790,484,'PDL',PURPLE],[790,496,'23500',PURPLE],[790,585,'weekly low',RED,1]],
    boxes:[[760,256,37,18.5,'High'],[762,719,35,19,'Low']],
    tags:[[48,18,'23,690.10','blue'],[66,19,'23,674.75','pink'],[237,19,'23,600.00','blue'],[256,18.5,'23,596.00','light'],[422.5,19,'23,526.50','gray'],[474.5,19,'23,505.30','blue'],[493,18.5,'23,500.00','blue'],[576,19,'23,462.65','dark'],[685,34,'23,417.50','red','03:53'],[719,19,'23,414.75','light'],[740,18.5,'23,412.30','blue']],
    times:[[146,'01:00 PM'],[280,'02:00 PM'],[381,'02:45 PM'],[482,'10',1],[582,'10:00 AM'],[717,'11:00 AM']],
    gear:837 },
  b:{ x:876, w:817, axis:[1614,74],
    art: () =>
      zone(876,110.5,244,39.5,'#fff9dc') + zone(876,315,315,22,'#fad6d8') + zone(876,396,288,25,'#dcefdc') + zone(1043,439,269,52,'#cfe9e3') +
      `<path d="M1229 397L1296 386V422L1229 434Z" fill="#f5f8fe"/><path d="M1229 397L1296 386M1229 434L1296 422" stroke="#e8effd" stroke-width="2"/><path d="M1229 415L1291 405" stroke="#7ba4f7" stroke-dasharray="6 4"/>` +
      hline(876,247,1577,BLUE) + hline(1609,247,1614,BLUE) + hline(876,266,1575,PINK) + hline(1609,266,1614,PINK) +
      hline(876,480,1579,BLUE) + hline(876,486,1566,BLUE) + hline(876,533,1517,GRAY) + hline(1609,533,1614,GRAY) +
      hline(876,597,1614,BLUE) + hline(876,663,1614,BLUE) +
      dotted(876,157.500,1578,'#787b86') + dotted(876,590.500,1614,RED) + dotted(876,594.500,1614,'#787b86') +
      trend(948,48,1234,252) + trend(1068,487,1234,287) + trend(1208,290,1408,431) +
      ema(emaB1,mB1) + ema(emaB2,mB2) +
      `<rect x="876" y="196" width="4" height="5" fill="${TEAL}"/>` +
      candles(candB1,mB1,7) + candles(candB2,mB2,7) +
      marks([[28,32],[238,70],[472,628],[760,160]],mB1,TEAL) + marks([[55,355],[160,365],[448,928],[577,1075]],mB1,RED) +
      marks([[97,143],[304,281],[514,535],[646,358]],mB2,TEAL) + marks([[16,406],[175,619],[253,619],[358,670],[568,751]],mB2,RED) +
      vdash(950,48,765) + vdash(1168,48,765) + vdash(1386,48,765) +
      ink([[1369,475],[1400,477],[1439,477]],p=>p,3.5) +
      ink([[1000,480],[1045,490],[1058,530],[1055,570],[1020,582],[992,565],[990,510],[1005,480]],mB3) + ink([[1035,505],[1040,520]],mB3) +
      ink([[1078,555],[1130,547]],mB3) + ink([[1105,550],[1118,620]],mB3) + ink([[1140,590],[1140,648]],mB3) +
      ink([[1010,675],[1040,680],[1068,725],[1065,770],[1035,778],[1010,755],[1008,710],[1015,680]],mB3) +
      ink([[1108,743],[1158,737]],mB3) + ink([[1130,745],[1140,803]],mB3) +
      ink([[1165,790],[1185,785],[1195,810],[1172,838],[1200,825]],mB3),
    ticks:[[57,'23,840.00'],[108,'23,800.00'],[208,'23,720.00'],[309,'23,640.00'],[359,'23,600.00'],[410,'23,560.00'],[466,'23,520.00'],[512,'23,480.00'],[561.7,'23,440.00'],[712,'23,320.00'],[761.7,'23,280.00']],
    notes:[[1607,248,'PDH',PURPLE],[1607,267,'open',PURPLE],[1607,481,'PDL',PURPLE],[1607,487,'23500',PURPLE],[1607,533,'weekly low',RED,1]],
    boxes:[[1576,148,37,19,'High'],[1578,616.5,35,19,'Low']],
    tags:[[148,19,'23,761.95','light'],[238,19,'23,690.10','blue'],[257,19,'23,674.75','pink'],[444,19,'23,526.50','gray'],[471,19,'23,505.30','blue'],[490,19,'23,500.00','blue'],[524,19,'23,462.65','dark'],[581,35,'23,417.50','red','08:53'],[616.5,19,'23,414.75','light'],[635,19,'23,412.30','blue'],[654,19,'23,359.80','blue']],
    times:[[954,'8',1],[1051,'12:00 PM'],[1172,'9',1],[1269,'12:00 PM'],[1391,'10',1],[1487,'12:00 PM'],[1608,'13',1]] },
  c:{ x:1696, w:806, axis:[2444,55],
    art: () =>
      hline(1696,344,2444,BLUE) + hline(1865,493,2444,BLUE) +
      dotted(1696,152.500,2407,'#787b86') + dotted(1696,527.500,2444,RED) + dotted(1696,539.500,2444,'#787b86') +
      ema(emaC,mC,2,'#3a3d47') + candles(candC,mC,17) +
      arrow(1706.5,260,false,RED) + arrow(1774.5,238,false,RED) + arrow(1888.5,257,false,RED) +
      arrow(1956.5,144,true,TEAL) + arrow(1820.5,137,true,TEAL,.5) +
      vdash(1945,48,765) +
      // Entry
      ink([[690,350],[645,358],[642,415],[690,405]],mC) + ink([[645,385],[690,375]],mC) +
      ink([[695,410],[700,378],[720,375],[738,395]],mC) + ink([[740,305],[745,395]],mC) + ink([[725,345],[770,338]],mC) +
      ink([[770,345],[775,378],[790,350]],mC) + ink([[800,340],[812,375],[845,350],[832,385],[830,418],[815,418],[820,378]],mC) +
      ink([[545,418],[590,420],[608,455],[605,490],[560,500],[525,490],[510,460],[525,425],[565,415]],mC,3.2,'#ef5f88') +
      // Re-entry
      ink([[695,795],[693,700],[725,700],[730,735],[700,745],[735,790]],mC) + ink([[745,765],[775,745],[760,730],[745,755],[755,778],[785,770]],mC) +
      ink([[795,740],[825,730]],mC) + ink([[830,725],[860,715],[845,700],[825,715],[835,738],[860,730]],mC) +
      ink([[865,710],[875,690],[890,720],[905,690],[905,720]],mC) + ink([[908,630],[920,715]],mC) + ink([[885,655],[955,640]],mC) +
      ink([[930,705],[950,665],[965,705],[990,665],[995,710],[1035,795],[1020,800],[995,740],[1000,700]],mC) +
      ink([[620,770],[655,785],[662,815],[630,835],[600,825],[590,795],[615,768]],mC,3.2,'#ef5f88') + ink([[620,790],[645,795],[640,815],[615,815],[610,800]],mC,3.2,'#ef5f88'),
    ticks:[[57.7,'230.00'],[109,'220.00'],[163,'210.00'],[213.4,'200.00'],[265.6,'190.00'],[318.6,'180.00'],[370,'170.00'],[422.5,'160.00'],[474.7,'150.00'],[579,'130.00'],[630.7,'120.00'],[682,'110.00'],[734.5,'100.00']],
    notes:[],
    boxes:[[2406,144,37,18,'High'],[2408,554,35,18,'Low']],
    tags:[[144,18,'211.80','light'],[184,19,'204.00','gray'],[335,19,'174.95','blue'],[484,19,'146.25','blue'],[518.5,34.5,'139.75','red','08:53'],[554,18,'137.40','light']],
    times:[[1729,'01:00 PM'],[1819.5,'02:00 PM'],[1956,'10',1],[2116,'11:00 AM'],[2207,'12:00 PM'],[2297,'01:00 PM'],[2388,'02:00 PM']] }
};

class ChartPane extends HTMLElement {
  connectedCallback(){
    if(this.shadowRoot) return;
    const c = CHARTS[this.getAttribute('chart')];
    const X = v => v - c.x, Y = v => v - 48;
    const ticks = c.ticks.map(([y,t])=>`<div class="tick" style="top:${Y(y)}px">${t}</div>`).join('');
    const notes = c.notes.map(([r,y,t,col,b])=>`<div class="note${b?' bold':''}" style="right:${c.x+c.w-r}px;top:${Y(y)}px;color:${col}">${t}</div>`).join('');
    const boxes = c.boxes.map(([x,y,w,h,t])=>`<div class="box" style="left:${X(x)}px;top:${Y(y)}px;width:${w}px;height:${h}px">${t}</div>`).join('');
    const tags = c.tags.map(([y,h,t,k,s])=>`<price-tag kind="${k}" style="left:${X(c.axis[0])}px;top:${Y(y)}px;width:${c.axis[1]}px;height:${h}px">${t}${s?`<span style="color:rgba(255,255,255,.7)">${s}</span>`:''}</price-tag>`).join('');
    const times = c.times.map(([x,t,b])=>`<div class="time${b?' bold':''}" style="left:${X(x)}px">${t}</div>`).join('');
    const gear = c.gear ? `<svg class="gear" style="left:${X(c.gear)-11}px" width="22" height="22" viewBox="0 0 28 28" fill="none" stroke="#131722"><path d="M14 2l11 6v12l-11 6-11-6V8z"/><circle cx="14" cy="14" r="4"/></svg>` : '';
    this.attachShadow({mode:'open'}).innerHTML = `<style>
      :host{position:relative;display:block;overflow:hidden;background:#fff;height:748px}
      svg.art{position:absolute;left:0;top:0}
      .axis{position:absolute;left:${X(c.axis[0])}px;width:${c.axis[1]}px;top:0;height:717px;overflow:hidden}
      .tick{position:absolute;left:10px;transform:translateY(-50%);font-size:13.5px;white-space:nowrap}
      .note{position:absolute;transform:translateY(-50%);font-size:14px;white-space:nowrap}
      .note.bold{font-weight:500;font-size:16.5px}
      .box{position:absolute;background:#e3effd;display:flex;align-items:center;justify-content:center;font-size:14px}
      .time{position:absolute;top:733px;transform:translate(-50%,-50%);font-size:13.5px;white-space:nowrap}
      .time.bold{font-weight:500;font-size:15px}
      .gear{position:absolute;top:722px}
      .frame{position:absolute;left:1px;top:0;right:0;bottom:0;border:2.5px solid #2962ff;pointer-events:none}
    </style>
    <svg class="art" width="${c.w}" height="748" viewBox="${c.x} 48 ${c.w} 748">${c.art()}</svg>
    <div class="axis">${ticks}</div>
    ${notes}${boxes}${tags}${times}${gear}
    <slot></slot>
    ${this.hasAttribute('active')?'<div class="frame"></div>':''}`;
  }
}
customElements.define('chart-pane', ChartPane);
</script>
</body>
</html>
